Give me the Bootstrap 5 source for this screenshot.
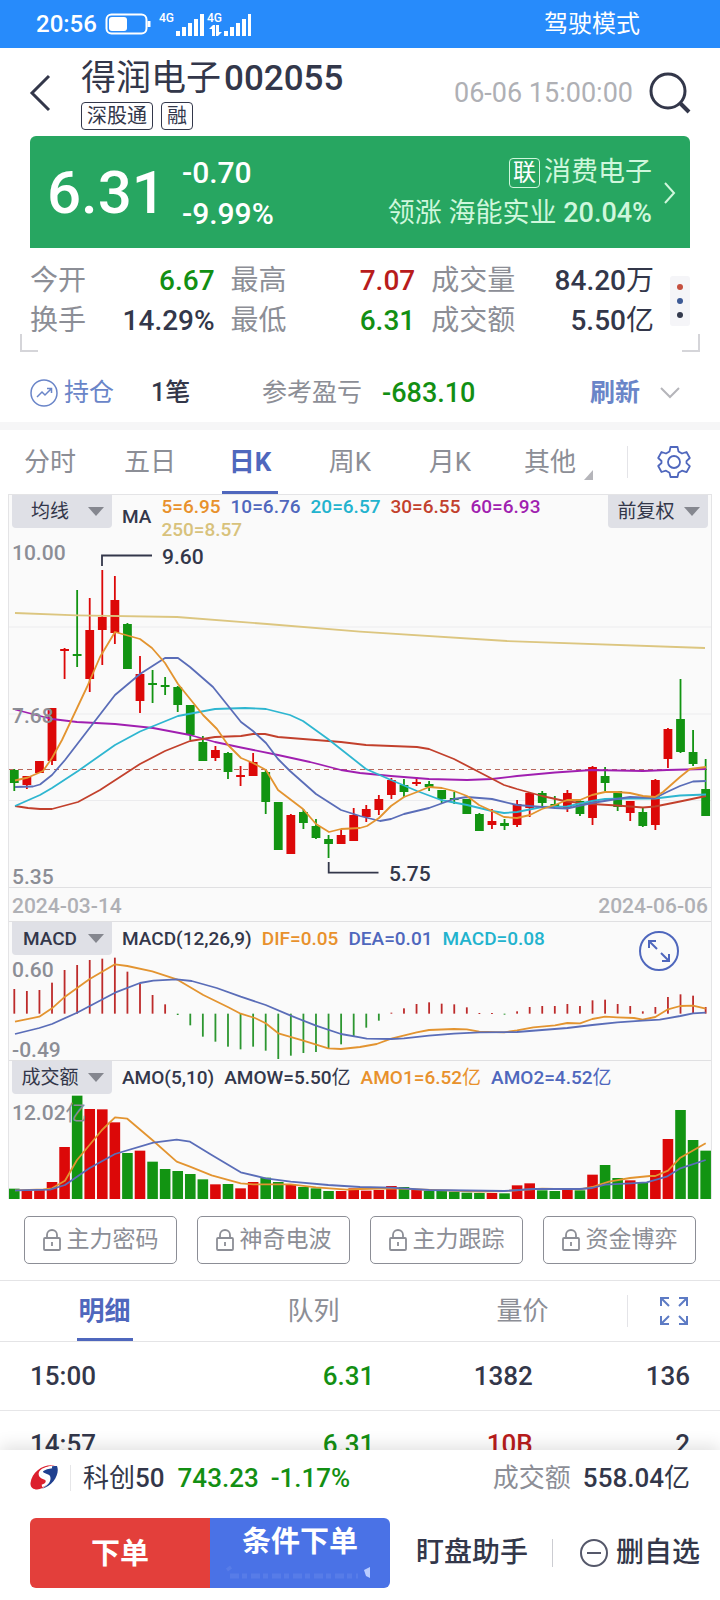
<!DOCTYPE html>
<html lang="zh-CN">
<head>
<meta charset="utf-8">
<meta name="viewport" content="width=device-width, initial-scale=1">
<title>得润电子 002055</title>
<link href="https://cdn.jsdelivr.net/npm/bootstrap@5.3.0/dist/css/bootstrap.min.css" rel="stylesheet">
<style>
:root{--ink:#33374a;--gray:#8c8e96;--blue:#4f67bd;--up:#b81c1c;--down:#138f13}
body{font-family:Roboto,"Noto Sans CJK SC",sans-serif;color:var(--ink);font-weight:400;font-size:26px;line-height:40px;height:100vh;overflow:hidden}
button{background:none;border:0;padding:0;color:inherit;font-weight:inherit;white-space:nowrap}
svg{display:block;flex-shrink:0}
.cjk{font-weight:400}
.ink{color:var(--ink)}.gray{color:var(--gray)}.blue{color:var(--blue)}.up{color:var(--up)}.down{color:var(--down)}
.scroller{min-height:0;overflow-y:auto;scrollbar-width:none}
.statusbar{height:48px;background:#278bfb;color:#fff;font-size:24px;padding:0 80px 0 36px;font-weight:500}
.topbar{height:88px;padding:2px 29px 0}
.stock-name{font-size:35px;line-height:46px;font-weight:500}
.stock-name span{margin-right:3px}
.tagbox{border:1px solid var(--ink);border-radius:4px;font-size:20px;line-height:26px;padding:0 5px}
.stamp{font-size:27px;color:#afb0b5}
.quote{margin:0 30px;height:112px;border-radius:6px 6px 0 0;background:#27a661;color:#fff;padding:2px 14px 0 17px}
.price{font-size:60px;line-height:72px;font-weight:500}
.diff{font-size:30px;line-height:41px;font-weight:500}
.sector{font-size:27px;line-height:41px;color:#cff7dc}
.sector .tagbox{border-color:#cff7dc;color:#fff;font-size:23px;line-height:28px;padding:0 3px}
.stats{margin:13px 20px 0;padding:0 10px 11px;position:relative}
.stats::before,.stats::after{content:"";position:absolute;bottom:0;width:18px;height:18px;border-bottom:2px solid #d5d5d9}
.stats::before{left:0;border-left:2px solid #d5d5d9}
.stats::after{right:0;border-right:2px solid #d5d5d9}
.stat-grid{display:grid;grid-template-columns:184fr 184fr 222fr;column-gap:16px;font-size:28px;font-weight:500}
.dots{width:20px;height:50px;background:#f5f5f8;border-radius:3px}
.dots i{width:6px;height:6px;border-radius:50%;display:block}
.position-row{height:70px;padding:12px 40px 0 30px;font-size:25px}
.holding{width:228px}
.pnl{font-size:27px;font-weight:500}
.band{height:8px;background:#f6f6f7}
.tabrow{height:64px;font-size:26px}
.tab-list{min-width:0}
.tab-list button{color:var(--gray);position:relative;height:100%;flex:1 1 0}
.tab-list button.active{color:var(--blue);font-weight:700}
.tab-list button.active::after{content:"";position:absolute;left:50%;bottom:0;width:56px;height:3px;margin-left:-28px;background:var(--blue)}
.tab-list.pad-end{padding-right:27px}
.tab-end{width:93px;border-left:1px solid #e4e4e8;height:32px}
.more::after{content:"";position:absolute;right:7px;bottom:14px;border-left:9px solid transparent;border-bottom:10px solid #b5b5ba}
.chart{margin:0 8px;border:1px solid #e4e4e6;border-bottom:0;background:#fafafa;font-size:21px;line-height:24px;font-weight:500}
.chart svg{width:100%;height:auto}
.tools{height:34px;padding:0 3px;gap:10px;font-size:19px}
.tools select{appearance:none;border:0;border-radius:0 0 4px 4px;width:100px;height:33px;padding:0 24px 0 0;text-align:center;font-size:19px;color:var(--ink);background:#dfe0e6 url("data:image/svg+xml,%3Csvg xmlns='http://www.w3.org/2000/svg' width='16' height='9'%3E%3Cpath d='M0 0h16l-8 9z' fill='%2385878f'/%3E%3C/svg%3E") no-repeat right 8px center}
.macd-select{font-weight:500}
.legend-row{gap:10px;padding-top:5px;white-space:nowrap}
.ma{line-height:23px;column-gap:10px}
.plot{position:relative;color:var(--gray)}
.plot span{position:absolute;left:3px}
.plot .axis-end{bottom:-2px}
.plot .axis-start{top:2px}
.dates{height:35px;border:solid #e0e0e2;border-width:1px 0;color:#afb0b5;padding:3px 3px 0}
.split-line{border-top:1px solid #e0e0e2}
.expand{position:absolute;right:32px;top:9px;z-index:1}
.locks{padding:17px 24px 16px;gap:20px}
.locks button{flex:1 1 0;height:48px;border:1px solid #8c8e96;border-radius:5px;font-size:23px;color:var(--gray);gap:6px}
.detail-tabs{border:solid #e4e4e6;border-width:1px 0;height:62px}
.ticks{width:100%;table-layout:fixed;font-weight:500}
.ticks td{height:68px;border-bottom:1px solid #e6e6e8;text-align:right;padding:0}
.ticks td:first-child{text-align:left;padding-left:30px}
.ticks td:last-child{padding-right:30px}
.dock{background:#fff;position:relative;z-index:2;box-shadow:0 -4px 16px rgba(0,0,0,.12);height:150px}
.index-row{height:56px;padding:0 30px;font-weight:500}
.index-row .brandmark{border-right:1px solid #e6e6e8;padding-right:12px}
.trade{margin:12px 20px 0 30px;height:70px}
.trade .order{flex:0 0 180px;color:#fff;font-size:29px;font-weight:700}
.sell-red{background:#e33f3b;border-radius:6px 0 0 6px;padding-top:2px}
.cond-blue{background:#4a72e6;border-radius:0 6px 6px 0;position:relative;line-height:48px}
.cond-blue svg{position:absolute;left:0;bottom:4px}
.aside{font-size:28px;font-weight:500}
</style>
</head>
<body class="d-flex flex-column">
<header class="statusbar d-flex align-items-center flex-shrink-0">
  <span>20:56</span>
  <svg class="ms-2" width="46" height="22" viewBox="0 0 46 22"><rect x="1.5" y="1.5" width="40" height="19" rx="5" fill="none" stroke="#fff" stroke-width="2"/><rect x="4" y="4" width="18" height="14" rx="3" fill="#fff"/><path d="M44 8v6" stroke="#fff" stroke-width="3"/></svg>
  <svg width="100" height="34" viewBox="151 7 100 34" fill="#fff" font-size="12" font-weight="500"><text x="159" y="22">4G</text><path d="M176 31h4v5h-4zM182 27h4v9h-4zM188 23h4v13h-4zM194 19h4v17h-4zM200 14h4v22h-4zM224 31h4v5h-4zM230 27h4v9h-4zM236 23h4v13h-4zM242 19h4v17h-4zM248 14h3v22h-3z"/><text x="207" y="22">4G</text><path d="M209 29l4-4h2v11h-3v-7zM216 25h3v7h3l-4 4h-2z"/></svg>
  <span class="ms-auto cjk">驾驶模式</span>
</header>

<main class="scroller flex-grow-1">
  <div class="topbar d-flex align-items-center">
    <button aria-label="返回"><svg width="24" height="40" viewBox="0 0 24 40" fill="none" stroke="#33374a" stroke-width="3"><path d="M20 3L3 20l17 17"/></svg></button>
    <div class="ms-4 ps-1">
      <div class="stock-name"><span class="cjk">得润电子</span>002055</div>
      <div class="d-flex gap-2"><span class="tagbox">深股通</span><span class="tagbox">融</span></div>
    </div>
    <span class="stamp ms-auto me-3">06-06 15:00:00</span>
    <button aria-label="搜索"><svg width="42" height="42" viewBox="0 0 42 42" fill="none" stroke="#33374a" stroke-width="3"><circle cx="19" cy="19" r="17"/><path d="M31 31l9 9" stroke-width="4"/></svg></button>
  </div>

  <section class="quote d-flex align-items-center">
    <span class="price">6.31</span>
    <div class="diff ms-3"><div>-0.70</div><div>-9.99%</div></div>
    <div class="sector ms-auto text-end me-2 pe-1"><div class="d-flex align-items-center justify-content-end gap-1"><span class="tagbox">联</span><span>消费电子</span></div><div>领涨 海能实业 <span class="fw-medium">20.04%</span></div></div>
    <svg width="12" height="22" viewBox="0 0 12 22" fill="none" stroke="#cff7dc" stroke-width="2"><path d="M1 1l9 10-9 10"/></svg>
  </section>

  <section class="stats d-flex align-items-center justify-content-between">
    <div class="stat-grid flex-grow-1">
      <div class="d-flex justify-content-between"><span class="cjk gray">今开</span><span class="down">6.67</span></div>
      <div class="d-flex justify-content-between"><span class="cjk gray">最高</span><span class="up">7.07</span></div>
      <div class="d-flex justify-content-between"><span class="cjk gray">成交量</span><span>84.20<span class="cjk">万</span></span></div>
      <div class="d-flex justify-content-between"><span class="cjk gray">换手</span><span>14.29%</span></div>
      <div class="d-flex justify-content-between"><span class="cjk gray">最低</span><span class="down">6.31</span></div>
      <div class="d-flex justify-content-between"><span class="cjk gray">成交额</span><span>5.50<span class="cjk">亿</span></span></div>
    </div>
    <div class="dots d-flex flex-column align-items-center justify-content-evenly ms-3"><i style="background:#c5503f"></i><i style="background:#3d5a96"></i><i style="background:#333a4d"></i></div>
  </section>

  <section class="position-row d-flex align-items-center">
    <div class="holding d-flex align-items-center flex-shrink-0">
      <svg width="28" height="28" viewBox="0 0 28 28" fill="none" stroke="#6a85c8" stroke-width="1.500"><circle cx="14" cy="14" r="13"/><path d="M7 18l5-5 3 3 6-6M17 9.500h4.500V14"/></svg>
      <span style="color:#6a85c8;margin-left:6px">持仓</span>
      <span style="margin-left:37px;font-weight:500">1笔</span>
    </div>
    <span class="gray ms-1">参考盈亏</span>
    <span class="pnl down ms-3 ps-1">-683.10</span>
    <button class="ms-auto" style="color:#6a85c8;font-weight:700">刷新</button>
    <svg style="margin-left:20px" width="20" height="12" viewBox="0 0 20 12" fill="none" stroke="#b5b5ba" stroke-width="2"><path d="M1 1l9 9 9-9"/></svg>
  </section>
  <div class="band"></div>

  <nav class="tabrow d-flex align-items-center">
    <div class="tab-list pad-end d-flex flex-grow-1 h-100">
      <button>分时</button><button>五日</button><button class="active">日K</button><button>周K</button><button>月K</button><button class="more">其他</button>
    </div>
    <div class="tab-end d-flex align-items-center justify-content-center">
      <button aria-label="设置"><svg width="34" height="34" viewBox="0 0 34 34" fill="none" stroke="#4f67bd" stroke-width="1.800" stroke-linejoin="round"><path d="M13.500 2h7l1 4.500 3.500 2 4.500-1.500 3.300 6-3.300 3.200v2l3.300 3-3.300 6-4.500-1.500-3.500 2-1 4.300h-7l-1-4.300-3.500-2L4.500 27l-3.300-6 3.300-3v-2L1.200 13l3.300-6L9 8.500l3.500-2z"/><circle cx="17" cy="17" r="6"/></svg></button>
    </div>
  </nav>

  <section class="chart">
    <div class="tools d-flex">
      <select aria-label="主图指标"><option>均线</option></select>
      <span style="padding-top:10px">MA</span>
      <div class="ma d-flex flex-wrap flex-grow-1 align-content-start" style="flex-basis:0">
        <span style="color:#e8912c">5=6.95</span><span class="blue">10=6.76</span><span style="color:#22b3ce">20=6.57</span><span style="color:#c2402c">30=6.55</span><span style="color:#a01fb0">60=6.93</span><span class="w-100" style="color:#d8c27c">250=8.57</span>
      </div>
      <select aria-label="复权"><option>前复权</option></select>
    </div>
    <div class="plot">
      <svg id="kline" viewBox="9 529 702 358"></svg>
      <span style="top:12px">10.00</span><span class="top-50" style="margin-top:-4px">7.68</span><span class="axis-end">5.35</span>
    </div>
    <div class="dates d-flex justify-content-between align-items-center"><span>2024-03-14</span><span>2024-06-06</span></div>
    <div class="position-relative">
      <div class="tools d-flex align-items-start">
        <select class="macd-select" aria-label="副图指标一"><option>MACD</option></select>
        <div class="legend-row d-flex"><span>MACD(12,26,9)</span><span style="color:#e8912c">DIF=0.05</span><span class="blue">DEA=0.01</span><span style="color:#22b3ce">MACD=0.08</span></div>
      </div>
      <button class="expand" aria-label="放大"><svg style="width:40px" viewBox="0 0 40 40" fill="none" stroke="#4f67bd" stroke-width="2"><circle cx="20" cy="20" r="19"/><path d="M18 18l-8-8M10 17v-7h7M22 22l8 8M30 23v7h-7"/></svg></button>
      <div class="plot"><svg id="macd" viewBox="9 956 702 104"></svg><span class="axis-start">0.60</span><span class="axis-end">-0.49</span></div>
    </div>
    <div class="split-line">
      <div class="tools d-flex align-items-start">
        <select aria-label="副图指标二"><option>成交额</option></select>
        <div class="legend-row d-flex"><span>AMO(5,10)</span><span>AMOW=5.50<span class="cjk">亿</span></span><span style="color:#e8912c">AMO1=6.52<span class="cjk">亿</span></span><span class="blue">AMO2=4.52<span class="cjk">亿</span></span></div>
      </div>
      <div class="plot"><svg id="amo" viewBox="9 1095 702 104"></svg><span style="top:6px">12.02<b class="cjk">亿</b></span></div>
    </div>
  </section>

  <div class="locks d-flex" id="locks"></div>

  <nav class="tabrow detail-tabs d-flex align-items-center">
    <div class="tab-list d-flex flex-grow-1 h-100"><button class="active">明细</button><button>队列</button><button>量价</button></div>
    <div class="tab-end d-flex align-items-center justify-content-center">
      <button aria-label="全屏"><svg width="28" height="28" viewBox="0 0 28 28" fill="none" stroke="#5d7bc4" stroke-width="2"><path d="M1 9V1h8M1 1l8 8M19 1h8v8M27 1l-8 8M1 19v8h8M1 27l8-8M27 19v8h-8M27 27l-8-8"/></svg></button>
    </div>
  </nav>
  <table class="ticks">
    <colgroup><col style="width:28%"><col style="width:24%"><col style="width:22%"><col></colgroup>
    <tr><td>15:00</td><td class="down">6.31</td><td>1382</td><td>136</td></tr>
    <tr><td>14:57</td><td class="down">6.31</td><td class="up">10B</td><td>2</td></tr>
  </table>
</main>

<footer class="dock flex-shrink-0">
  <div class="index-row d-flex align-items-center">
    <span class="brandmark"><svg width="28" height="26" viewBox="0 0 28 26"><path d="M27 1C30 8 24 21 11 24c7-3 11-8 9-13-2-3-7-2-7-5 1-3 8-5 14-5z" fill="#20408f"/><path d="M25 .5C14-1.500 2 6 .5 18c-.5 6 6 8 12 5 4-2 6-6 5-8-1-3-6-2-7-6-.5-4 6-8 14.500-8.500z" fill="#dc1f2d"/><path d="M22 2C14 3 9 6 10 10c1 4 7 2 7 6 0 2-2 4-5 5" fill="none" stroke="#fff" stroke-width="2.500"/></svg></span>
    <span class="ms-2 ps-1"><span class="cjk">科创</span>50</span><span class="down" style="margin-left:13px">743.23</span><span class="down ms-2 ps-1">-1.17%</span>
    <span class="cjk gray ms-auto">成交额</span><span class="ms-2 ps-1">558.04<span class="cjk">亿</span></span>
  </div>
  <div class="trade d-flex align-items-center">
    <button class="order sell-red h-100">下单</button>
    <button class="order cond-blue h-100 d-flex justify-content-center align-items-start">条件下单<svg width="180" height="20" viewBox="0 0 180 20"><path d="M18 3l2 3M20 12h128" fill="none" stroke="#6f8eea" stroke-width="5" stroke-dasharray="9 3 5 4" opacity=".35"/><path d="M154 6l6-3v11l-4-2z" fill="#b9ccff"/></svg></button>
    <button class="aside" style="margin-left:26px">盯盘助手</button>
    <span class="vr ms-4 align-self-center" style="height:28px"></span>
    <button class="aside ms-auto d-flex align-items-center gap-2"><svg width="28" height="28" viewBox="0 0 28 28" fill="none" stroke="#55586a" stroke-width="2"><circle cx="14" cy="14" r="13"/><path d="M7 14h14"/></svg>删自选</button>
  </div>
</footer>

<script src="https://cdn.jsdelivr.net/npm/bootstrap@5.3.0/dist/js/bootstrap.bundle.min.js"></script>
<script>
const RED='#dc0808', GREEN='#129412', X0=14.3, STEP=12.57;
const x=i=>X0+i*STEP;
const rect=(cx,w,a,b,c)=>`<rect x="${cx-w/2}" y="${a}" width="${w}" height="${Math.max(b-a,1)}" fill="${c}"/>`;
const line=(pts,c)=>`<polyline points="${pts}" fill="none" stroke="${c}" stroke-width="1.8" stroke-linejoin="round"/>`;
const grid=y=>`<path d="M9 ${y}H711" stroke="#ececee"/>`;

// colour, high, body top, body bottom, low
const candles=[['g',769,770,783,791],['r',776,776,785,789],['r',761,761,773,773],['r',708,708,761,765],['r',648,649,651,679],['g',590,654,656,667],['r',598,630,679,692],['r',570,617,630,665],['r',576,600,633,644],['g',623,624,669,669],['r',656,674,701,713],['g',670,683,685,703],['g',677,685,687,695],['g',686,687,705,712],['g',705,705,735,740],['g',736,742,761,761],['r',746,750,758,761],['g',752,753,772,779],['r',766,775,777,786],['r',753,762,776,776],['g',769,772,802,814],['g',802,802,850,850],['r',814,815,854,854],['g',809,812,823,829],['g',819,826,838,839],['g',835,839,844,858],['r',830,835,844,844],['r',808,815,841,841],['r',805,809,817,822],['r',795,799,810,815],['r',778,780,795,799],['g',779,785,792,797],['r',777,782,784,786],['g',781,784,787,791],['g',790,790,799,803],['g',792,798,800,804],['g',799,799,814,814],['g',813,814,831,831],['r',809,821,825,829],['g',819,823,826,830],['r',800,804,825,827],['r',792,793,808,817],['g',791,793,803,806],['g',796,804,807,807],['r',790,793,808,812],['g',800,801,814,816],['r',766,767,818,825],['g',767,776,783,791],['g',791,791,807,811],['r',801,801,813,821],['g',808,812,826,827],['r',779,780,825,830],['r',728,729,759,768],['g',679,719,752,753],['g',730,752,764,766],['g',759,789,816,816]];
const col=c=>c==='r'?RED:GREEN;
let k=grid(627)+grid(714)+grid(800.5)+'<path d="M9 769.5H711" stroke="#b8685c" stroke-width="1.2" stroke-dasharray="5 4"/>';
candles.forEach((d,i)=>{k+=rect(x(i),1.8,d[1],d[4],col(d[0]))+rect(x(i),8.8,d[2],d[3],col(d[0]));});
k+=line('15,613 77,615.300 177,617 267,624 360,631.700 507,641 705,648','#dcc680');
k+=line('15,709.5 40,716 52,719 77,722 115,724 153,728 190,735 215,742 241,747.5 278,755 310,762 341,770 360,773 391,776 429,779 467,780 492,779 517,776 555,772.5 592,770 643,771 667,770 706,769','#a01fb0');
k+=line('15,806 28,808 40,809 52,809 78,802 100,790 140,764 165,751 190,741 215,737 241,736 253,734 265,734 278,737 303,739 341,742 366,745 417,747 429,749 454,759 479,772 504,785 517,789 542,796 567,801.5 592,804 617,805.5 643,807.5 655,806.5 680,801.5 706,796','#c2402c');
k+=line('15,806 40,795 52,788 78,771 115,745 140,731.5 178,716 215,709 245,708 266,709 278,712 290,715 303,721 328,739 366,769 391,780 417,791 441,800 467,805 492,811 504,813 517,812 542,807 567,806.5 592,801 605,799 630,798.5 655,798.5 680,795.5 706,794.5','#2eb6d0');
k+=line('15,787 33,786.5 40,784.5 52,775 65,760 115,695 140,674 165,658 178,658 190,667 213,687 241,722 253,731 266,743 278,759 290,771 316,794 341,810 360,816 380,821 391,819 404,814 429,808 454,799 467,797 492,799 517,805 555,808 567,808.5 592,803 617,799 630,797 655,798 667,792 680,786 693,781.5 706,781','#5a6db8');
k+=line('15,780.5 28,777.5 43,771 52,758 62,740 87,687 100,657 115,632 140,639 152,648 165,663 178,684 203,715 217,729 228,745 241,758 253,763 266,770 278,790 303,809 316,824 329,832 341,829 360,828 367,826 379,818 391,806 404,797 417,792 429,787 442,788 454,791 467,796 479,805 492,811 504,817 517,818 530,815 542,809 555,805 567,800 580,800 592,795 605,792 617,792 630,793 643,796 655,797 663,792 680,777 690,769 706,767','#e39430');
k+='<g fill="none" stroke="#33374a" stroke-width="1.8"><path d="M102 566V555.500H152M328.700 862V872.700H378.500"/></g><g fill="#33374a" font-size="21"><text x="162" y="564">9.60</text><text x="389" y="881">5.75</text></g>';
document.getElementById('kline').innerHTML=k;

// bar ends and lines are in thirds of a unit below 910
const y3=v=>910+v/3;
const path3=(a,b)=>a.map(p=>[p[0]/3,y3(p[1])]).concat(b.map(p=>[360+p[0]/3,y3(p[1])])).map(p=>p.map(n=>n.toFixed(1)).join(',')).join(' ');
const macd=[237,243,240,218,180,165,150,146,143,185,222,255,283,315,346,380,395,410,418,410,422,447,437,429,426,416,403,380,353,332,308,295,282,277,281,283,292,309,309,314,304,291,288,288,282,288,271,269,282,288,304,291,261,253,257,291];
let m='';
macd.forEach((v,i)=>{m+=rect(x(i),1.8,Math.min(y3(v),y3(311)),Math.max(y3(v),y3(311)),v<311?'#bd2b2b':'#2c9630');});
m+=line(path3([[45,335],[118,320],[156,295],[195,260],[268,208],[345,163],[382,168],[457,184],[530,208],[610,255],[685,292],[722,311],[765,324],[797,340],[835,370],[910,392],[985,415],[1023,417]],[[0,411],[50,402],[94,386],[170,367],[207,360],[282,357],[320,358],[358,365],[433,367],[471,361],[520,352],[585,346],[622,339],[660,340],[697,327],[735,320],[772,322],[822,324],[848,329],[886,321],[924,298],[961,288],[999,287],[1037,296]]),'#e39430');
m+=line(path3([[45,372],[118,354],[156,342],[231,308],[345,248],[420,219],[460,212],[530,208],[575,213],[650,234],[722,260],[797,285],[872,317],[948,347],[1023,372]],[[0,382],[20,386],[94,387],[132,385],[207,377],[282,371],[358,367],[471,366],[546,360],[622,354],[697,345],[772,337],[848,332],[899,329],[961,318],[999,310],[1037,308]]),'#5a6db8');
document.getElementById('macd').innerHTML=m;

const amo=[836,841,838,816,711,557,597,598,637,729,722,755,777,783,792,808,823,822,835,816,803,816,824,831,835,843,843,835,842,840,828,831,840,843,841,845,848,849,849,850,826,820,841,843,837,841,794,765,804,811,819,780,687,600,690,722];
const amoColor='grrrrgrrrgrgggggrgrrggrggg'+'rrrrrgrgggggrgrrggrgrggrgrrggg';
let a='';
amo.forEach((v,i)=>{a+=rect(x(i),10.6,y3(v),1199,col(amoColor[i]));});
a+=line(path3([[45,841],[130,838],[156,835],[195,812],[231,750],[306,660],[345,622],[382,626],[457,690],[530,755],[570,770],[635,796],[722,820],[760,823],[872,823],[948,832],[1040,839]],[[0,837],[94,835],[170,838],[358,845],[433,843],[546,836],[660,838],[697,831],[747,815],[810,804],[870,798],[886,798],[924,782],[961,743],[1037,700]]),'#e39430');
a+=line(path3([[45,841],[150,839],[195,825],[268,775],[345,732],[460,698],[530,689],[570,695],[635,735],[722,787],[797,805],[872,815],[985,825]],[[0,831],[94,833],[207,840],[433,843],[520,837],[660,837],[697,834],[735,824],[810,820],[860,817],[920,800],[961,775],[1037,750]]),'#5a6db8');
document.getElementById('amo').innerHTML=a;

document.getElementById('locks').innerHTML=['主力密码','神奇电波','主力跟踪','资金博弈'].map(t=>`<button class="d-flex align-items-center justify-content-center"><svg width="18" height="22" viewBox="0 0 18 22" fill="none" stroke="#8c8e96" stroke-width="1.8"><rect x="1" y="9" width="16" height="12" rx="1"/><path d="M4 9V6a5 5 0 0 1 10 0v3M9 13v4"/></svg>${t}</button>`).join('');
</script>
</body>
</html>
